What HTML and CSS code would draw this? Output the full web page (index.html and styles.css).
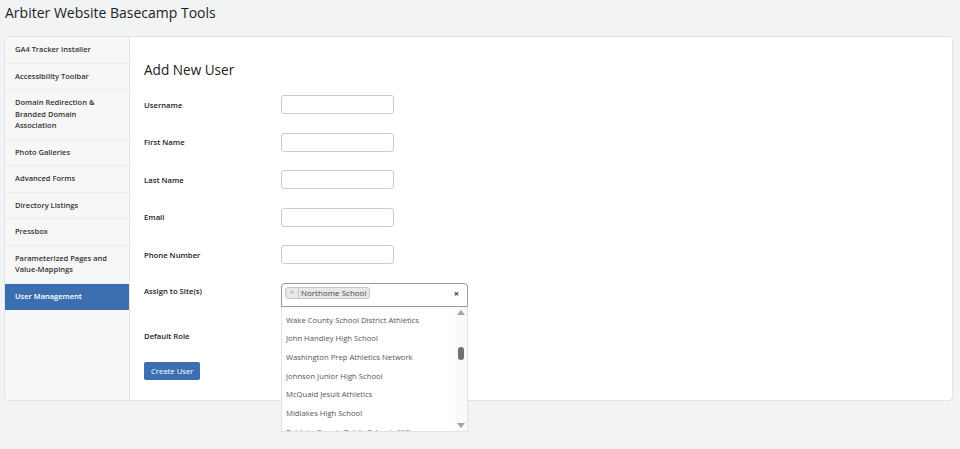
FILE: index.html
```html
<!DOCTYPE html>
<html lang="en">
<head>
  <meta charset="UTF-8">
  <meta name="viewport" content="width=device-width, initial-scale=1.0">
  <title>Arbiter Website Basecamp Tools</title>
  <link rel="stylesheet" href="styles.css">
</head>
<body>
  <h1 class="page-title">Arbiter Website Basecamp Tools</h1>

  <div class="card">
    <nav class="sidebar">
      <a class="nav-item" href="#">GA4 Tracker Installer</a>
      <a class="nav-item" href="#">Accessibility Toolbar</a>
      <a class="nav-item" href="#">Domain Redirection &amp; Branded Domain Association</a>
      <a class="nav-item" href="#">Photo Galleries</a>
      <a class="nav-item" href="#">Advanced Forms</a>
      <a class="nav-item" href="#">Directory Listings</a>
      <a class="nav-item" href="#">Pressbox</a>
      <a class="nav-item" href="#">Parameterized Pages and Value-Mappings</a>
      <a class="nav-item active" href="#">User Management</a>
    </nav>

    <main class="content">
      <h2 class="section-title">Add New User</h2>

      <form class="user-form">
        <div class="form-row">
          <label>Username</label>
          <input class="text-input" type="text">
        </div>
        <div class="form-row">
          <label>First Name</label>
          <input class="text-input" type="text">
        </div>
        <div class="form-row">
          <label>Last Name</label>
          <input class="text-input" type="text">
        </div>
        <div class="form-row">
          <label>Email</label>
          <input class="text-input" type="text">
        </div>
        <div class="form-row">
          <label>Phone Number</label>
          <input class="text-input" type="text">
        </div>
        <div class="form-row site-row">
          <label>Assign to Site(s)</label>
          <div class="multi-select">
            <div class="selection">
              <span class="tag"><span class="tag-remove">×</span>Northome School</span>
              <span class="clear-all">×</span>
            </div>
            <div class="dropdown">
              <ul class="options">
                <li>Wake County School District Athletics</li>
                <li>John Handley High School</li>
                <li>Washington Prep Athletics Network</li>
                <li>Johnson Junior High School</li>
                <li>McQuaid Jesuit Athletics</li>
                <li>Midlakes High School</li>
                <li>Baldwin County Public Schools (WI)</li>
              </ul>
              <div class="scrollbar">
                <span class="arrow up"></span>
                <span class="track"><span class="thumb"></span></span>
                <span class="arrow down"></span>
              </div>
            </div>
          </div>
        </div>
        <div class="form-row role-row">
          <label>Default Role</label>
        </div>

        <button type="button" class="btn-primary">Create User</button>
      </form>
    </main>
  </div>
</body>
</html>
```

FILE: styles.css
```css
* {
  margin: 0;
  padding: 0;
  box-sizing: border-box;
}

html {
  height: 100%;
}

body {
  font-family: 'Segoe UI', 'Open Sans', 'Noto Sans', sans-serif;
  background: #f2f3f5;
  color: #212529;
  min-height: 100%;
  padding: 0 7px 48px 4px;
}

.page-title {
  font-size: 14px;
  font-weight: 400;
  line-height: 24px;
  padding: 1px 0 0 1px;
  margin-bottom: 11px;
  color: #222;
}

.card {
  display: flex;
  background: #fff;
  border: 1px solid #e1e3e6;
  border-radius: 4px;
}

/* left navigation */
.sidebar {
  width: 125px;
  flex-shrink: 0;
  background: #f7f7f7;
  border-right: 1px solid #e6e6e6;
  border-radius: 4px 0 0 4px;
  display: flex;
  flex-direction: column;
}

.nav-item {
  display: block;
  padding: 7px 19px 7px 10px;
  font-size: 7.5px;
  font-weight: 600;
  line-height: 11.5px;
  color: #333;
  text-decoration: none;
  border-bottom: 1px solid #ececec;
}

.nav-item.active {
  background: #3b6fb0;
  color: #fff;
  border-bottom-color: #3b6fb0;
}

/* main area */
.content {
  flex: 1;
  padding: 23px 14px 20px 14px;
}

.section-title {
  font-size: 13.6px;
  font-weight: 400;
  color: #222;
  line-height: 20px;
  margin-bottom: 15px;
}

.form-row {
  display: flex;
  align-items: center;
  margin-bottom: 18.5px;
}

.form-row label {
  width: 137px;
  flex-shrink: 0;
  font-size: 7.7px;
  font-weight: 600;
  color: #222;
}

.site-row {
  align-items: flex-start;
}

.site-row label {
  padding-top: 3px;
}

.text-input {
  width: 113px;
  height: 19px;
  border: 1px solid #c9ccd0;
  border-radius: 3px;
  background: #fff;
}

/* site picker */
.multi-select {
  position: relative;
  width: 187px;
}

.selection {
  display: flex;
  align-items: flex-start;
  justify-content: space-between;
  height: 24px;
  padding: 3px 8px 0 3px;
  border: 1px solid #9a9a9a;
  border-radius: 4px 4px 0 0;
  background: #fff;
}

.tag {
  display: inline-flex;
  align-items: center;
  height: 12px;
  padding-right: 3px;
  font-size: 8px;
  color: #444;
  background: #e8e8e8;
  border: 1px solid #c8c8c8;
  border-radius: 3px;
}

.tag-remove {
  font-size: 7px;
  color: #999;
  padding: 0 4px;
  margin-right: 2px;
  border-right: 1px solid #c8c8c8;
  line-height: 10px;
}

.clear-all {
  font-size: 9px;
  font-weight: 700;
  color: #333;
  line-height: 14px;
}

.dropdown {
  position: absolute;
  z-index: 10;
  top: 100%;
  left: 0;
  right: 0;
  height: 125px;
  display: flex;
  background: #fff;
  border: 1px solid #e3e3e3;
  border-top: none;
  overflow: hidden;
}

.options {
  flex: 1;
  list-style: none;
  padding-top: 4px;
}

.options li {
  padding: 0 4px;
  height: 18.7px;
  line-height: 18.7px;
  font-size: 7.7px;
  color: #555;
  white-space: nowrap;
}

.scrollbar {
  width: 12px;
  display: flex;
  flex-direction: column;
  align-items: center;
  padding: 3px 0;
  background: #fafafa;
}

.arrow {
  width: 0;
  height: 0;
  border-left: 4px solid transparent;
  border-right: 4px solid transparent;
}

.arrow.up {
  border-bottom: 5px solid #a3a3a3;
}

.arrow.down {
  border-top: 5px solid #a3a3a3;
}

.track {
  flex: 1;
  display: flex;
  padding-top: 32px;
}

.thumb {
  width: 6px;
  height: 13px;
  border-radius: 3px;
  background: #707070;
}

.role-row {
  height: 21px;
  margin-bottom: 11px;
}

.btn-primary {
  background: #3b6fb0;
  color: #fff;
  border: none;
  border-radius: 2px;
  font-family: inherit;
  font-size: 7.7px;
  padding: 0 7px;
  height: 18px;
  cursor: pointer;
}
```
